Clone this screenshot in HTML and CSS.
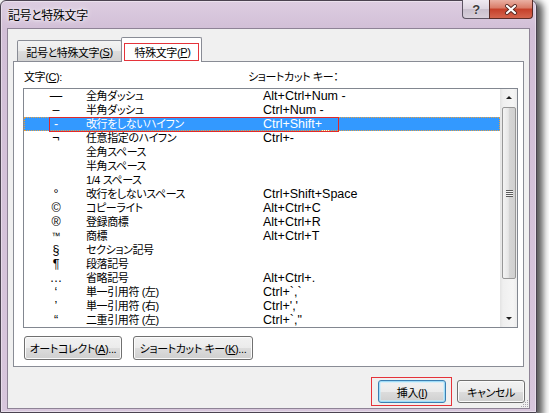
FILE: index.html
```html
<!DOCTYPE html>
<html lang="ja">
<head>
  <meta charset="UTF-8" />
  <title>記号と特殊文字</title>
  <link rel="stylesheet" href="styles.css">
</head>
<body>
  <div class="window">
    <div class="titlebar">
      <span class="title">記号と特殊文字</span>
      <div class="caption-buttons">
        <button class="cap help">?</button>
        <button class="cap close">
          <svg width="14" height="11" viewBox="0 0 14 11">
            <path d="M3 2 L11 9 M11 2 L3 9" stroke="#5a2a24" stroke-width="4" stroke-linecap="round"/>
            <path d="M3 2 L11 9 M11 2 L3 9" stroke="#fff" stroke-width="2.2" stroke-linecap="round"/>
          </svg>
        </button>
      </div>
    </div>

    <div class="client">
      <div class="tabs">
        <div class="tab">記号と特殊文字(<u>S</u>)</div>
        <div class="tab active"><span class="mark">特殊文字(<u>P</u>)</span></div>
      </div>

      <div class="panel">
        <div class="labels">
          <span class="lbl-char">文字(<u>C</u>):</span>
          <span>ショートカット キー：</span>
        </div>

        <div class="listbox">
          <div class="rows">
            <div class="row"><span class="sym">—</span><span>全角ダッシュ</span><span class="key">Alt+Ctrl+Num -</span></div>
            <div class="row"><span class="sym">–</span><span>半角ダッシュ</span><span class="key">Ctrl+Num -</span></div>
            <div class="row selected"><span class="sym">-</span><span>改行をしないハイフン</span><span class="key">Ctrl+Shift+_</span><span class="row-mark"></span></div>
            <div class="row"><span class="sym">¬</span><span>任意指定のハイフン</span><span class="key">Ctrl+-</span></div>
            <div class="row"><span class="sym"></span><span>全角スペース</span><span class="key"></span></div>
            <div class="row"><span class="sym"></span><span>半角スペース</span><span class="key"></span></div>
            <div class="row"><span class="sym"></span><span>1/4 スペース</span><span class="key"></span></div>
            <div class="row"><span class="sym">°</span><span>改行をしないスペース</span><span class="key">Ctrl+Shift+Space</span></div>
            <div class="row"><span class="sym">©</span><span>コピーライト</span><span class="key">Alt+Ctrl+C</span></div>
            <div class="row"><span class="sym">®</span><span>登録商標</span><span class="key">Alt+Ctrl+R</span></div>
            <div class="row"><span class="sym tm">™</span><span>商標</span><span class="key">Alt+Ctrl+T</span></div>
            <div class="row"><span class="sym">§</span><span>セクション記号</span><span class="key"></span></div>
            <div class="row"><span class="sym">¶</span><span>段落記号</span><span class="key"></span></div>
            <div class="row"><span class="sym">…</span><span>省略記号</span><span class="key">Alt+Ctrl+.</span></div>
            <div class="row"><span class="sym">‘</span><span>単一引用符 (左)</span><span class="key">Ctrl+`,`</span></div>
            <div class="row"><span class="sym">’</span><span>単一引用符 (右)</span><span class="key">Ctrl+','</span></div>
            <div class="row"><span class="sym">“</span><span>二重引用符 (左)</span><span class="key">Ctrl+`,"</span></div>
          </div>
          <div class="vscroll">
            <div class="sb-arrow"><span class="tri up"></span></div>
            <div class="sb-track">
              <div class="sb-thumb"><span class="grip-lines"></span></div>
            </div>
            <div class="sb-arrow"><span class="tri down"></span></div>
          </div>
        </div>

        <div class="panel-buttons">
          <button class="btn btn-auto">オートコレクト(<u>A</u>)...</button>
          <button class="btn btn-keys">ショートカット キー(<u>K</u>)...</button>
        </div>
      </div>

      <div class="footer">
        <div class="mark-box"><button class="btn default">挿入(<u>I</u>)</button></div>
        <button class="btn">キャンセル</button>
      </div>

      <svg class="size-grip" width="9" height="9" viewBox="0 0 9 9">
        <g fill="#a9a3ad">
          <rect x="7" y="1" width="1" height="1"/>
          <rect x="5" y="3" width="1" height="1"/><rect x="7" y="3" width="1" height="1"/>
          <rect x="3" y="5" width="1" height="1"/><rect x="5" y="5" width="1" height="1"/><rect x="7" y="5" width="1" height="1"/>
          <rect x="1" y="7" width="1" height="1"/><rect x="3" y="7" width="1" height="1"/><rect x="5" y="7" width="1" height="1"/><rect x="7" y="7" width="1" height="1"/>
        </g>
      </svg>
    </div>
  </div>
</body>
</html>
```

FILE: styles.css
```css
* {
  box-sizing: border-box;
}
body {
  margin: 0;
  background: #fff;
  font-family: "Liberation Sans", "Noto Sans CJK JP", sans-serif;
  font-size: 11px;
  letter-spacing: -0.4px;
  font-feature-settings: "palt";
  color: #000;
}
button {
  font: inherit;
  letter-spacing: inherit;
  color: inherit;
  margin: 0;
}
u {
  text-underline-offset: 1px;
}

/* window frame */
.window {
  width: 537px;
  height: 413px;
  border: 1px solid #4b4350;
  border-radius: 6px 6px 0 0;
  background: linear-gradient(#ddcde1, #d2bfd7 28px, #d8c6dc);
  box-shadow: 4px 3px 7px 2px rgba(0, 0, 0, 0.65), inset 0 0 0 1px rgba(255, 255, 255, 0.4);
  padding: 0 6px 3px;
  display: flex;
  flex-direction: column;
}
.titlebar {
  height: 27px;
  display: flex;
  align-items: center;
  padding-left: 1px;
}
.title {
  font-size: 12px;
  text-shadow: 0 0 6px #fff, 0 0 3px #fff;
}
.caption-buttons {
  margin-left: auto;
  margin-right: -3px;
  margin-top: -1px;
  align-self: flex-start;
  display: flex;
}
.cap {
  height: 19px;
  padding: 0;
  border: 1px solid #5d5463;
  border-top: none;
  display: flex;
  align-items: center;
  justify-content: center;
}
.help {
  width: 27px;
  border-right: none;
  border-radius: 0 0 0 4px;
  background: linear-gradient(#efe9f1, #ddd4e0 50%, #c9bfcd 50%, #d8cfdb);
  font-weight: bold;
  font-size: 13px;
  color: #3c3c3c;
  text-shadow: 0 0 2px #fff;
}
.close {
  width: 44px;
  border-color: #5a2b26;
  border-radius: 0 0 4px 0;
  background: linear-gradient(#eab0a3, #d97a66 45%, #c53f29 50%, #d4654e);
}

/* dialog body */
.client {
  flex: 1;
  position: relative;
  border: 1px solid #8e8396;
  background: #f0f0f0;
  display: flex;
  flex-direction: column;
}
.tabs {
  display: flex;
  align-items: flex-end;
  height: 25px;
  margin-top: 8px;
  margin-bottom: -1px;
  padding-left: 9px;
  position: relative;
  z-index: 1;
}
.tab {
  width: 105px;
  height: 21px;
  margin-bottom: 1px;
  padding-top: 2px;
  border: 1px solid #898c95;
  border-bottom: none;
  border-radius: 2px 2px 0 0;
  background: linear-gradient(#f3f3f3, #ebebeb 50%, #dddddd 50%, #d2d2d2);
  display: flex;
  align-items: center;
  justify-content: center;
}
.tab.active {
  width: 81px;
  height: 25px;
  margin-left: -1px;
  margin-bottom: 0;
  padding: 5px 0 0 2px;
  background: #fff;
  align-items: flex-start;
  justify-content: flex-start;
}
.mark {
  width: 75px;
  height: 18px;
  border: 1px solid #e5333a;
  display: flex;
  align-items: center;
  justify-content: center;
  padding-left: 2px;
}

.panel {
  height: 306px;
  margin: 0 5px;
  padding: 8px 5px 0 9px;
  border: 1px solid #898c95;
  background: #fff;
}
.labels {
  display: flex;
  height: 14px;
  line-height: 14px;
  margin-bottom: 4px;
}
.lbl-char {
  width: 225px;
  padding-left: 1px;
}

/* character list */
.listbox {
  width: 495px;
  height: 240px;
  border: 1px solid #828790;
  display: flex;
}
.rows {
  flex: 1;
}
.row {
  display: grid;
  grid-template-columns: 62px 177px 1fr;
  height: 14px;
  line-height: 14px;
  white-space: nowrap;
  position: relative;
}
.sym,
.key {
  font-size: 12.5px;
  letter-spacing: 0;
}
.sym {
  text-align: center;
  padding-left: 2px;
}
.tm {
  font-size: 9px;
}
.row.selected {
  background: #3399ff;
  color: #fff;
  outline: 1px dotted #e8a040;
  outline-offset: -1px;
}
.row-mark {
  position: absolute;
  left: 25px;
  top: 0;
  width: 290px;
  height: 15px;
  border: 1px solid #e02a2a;
}

.vscroll {
  width: 17px;
  display: flex;
  flex-direction: column;
  background: linear-gradient(to right, #e3e3e3, #efefef 3px, #f5f5f5 13px, #ececec);
}
.sb-arrow {
  height: 17px;
  display: flex;
  align-items: center;
  justify-content: center;
}
.tri {
  width: 0;
  height: 0;
  border-left: 3px solid transparent;
  border-right: 3px solid transparent;
}
.tri.up {
  border-bottom: 3px solid #1e1e1e;
}
.tri.down {
  border-top: 3px solid #1e1e1e;
}
.sb-track {
  flex: 1;
  padding: 1px 1px 0 2px;
}
.sb-thumb {
  height: 172px;
  border: 1px solid #979797;
  border-radius: 2px;
  background: linear-gradient(to right, #f4f4f4, #e6e6e6 45%, #d6d6d6 50%, #d0d0d0);
  display: flex;
  align-items: center;
  justify-content: center;
}
.grip-lines {
  width: 7px;
  height: 7px;
  background: repeating-linear-gradient(#5c5c5c 0 1px, #f4f4f4 1px 2px);
}

/* push buttons */
.btn {
  height: 24px;
  padding: 0;
  border: 1px solid #707070;
  border-radius: 3px;
  background: linear-gradient(#f2f2f2, #ebebeb 50%, #dddddd 50%, #cfcfcf);
  box-shadow: inset 0 0 0 1px #fbfbfb;
  white-space: nowrap;
}
.panel-buttons {
  display: flex;
  gap: 11px;
  margin-top: 8px;
  padding-left: 1px;
}
.btn-auto {
  width: 98px;
}
.btn-keys {
  width: 120px;
}
.footer {
  display: flex;
  justify-content: flex-end;
  align-items: center;
  gap: 5px;
  margin-top: 10px;
  padding-right: 4px;
}
.footer .btn {
  width: 68px;
  height: 23px;
}
.mark-box {
  border: 1px solid #e5333a;
  padding: 2px 5px 2px 6px;
}
.btn.default {
  border-color: #3c7fb1;
  box-shadow: inset 0 0 0 1px #9fdcf8, inset 0 0 0 2px rgba(200, 236, 252, 0.6);
}
.size-grip {
  position: absolute;
  right: 0;
  bottom: 0;
}
```
